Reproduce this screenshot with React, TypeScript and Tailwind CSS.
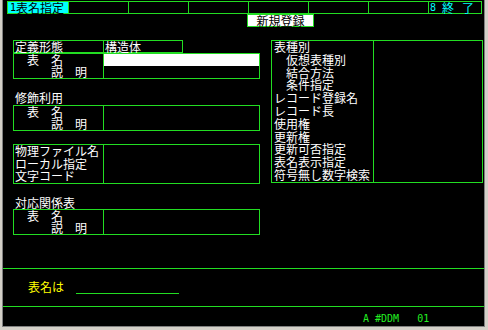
import React from 'react';

const G = 'border-[#22dd22]';

function Box2({ left, right, rows, leftW = 89, w, white }: { left: React.ReactNode; right?: React.ReactNode; rows: number; leftW?: number; w: string; white?: boolean }) {
  return (
    <div className={`flex border ${G} ${w}`} style={{ height: rows * 12 + 2 }}>
      <div className="shrink-0 leading-[12px] pl-[1px]" style={{ width: leftW }}>
        {left}
      </div>
      <div className={`flex-1 border-l ${G} leading-[12px]`}>
        {white && <div className="h-[12px] bg-white" />}
        {right}
      </div>
    </div>
  );
}

function NameDesc() {
  return (
    <>
      <div className="whitespace-pre">{'\u3000表\u3000名'}</div>
      <div className="whitespace-pre">{'\u3000\u3000\u3000説\u3000明'}</div>
    </>
  );
}

const rightRows: [string, boolean][] = [
  ['表種別', false],
  ['仮想表種別', true],
  ['結合方法', true],
  ['条件指定', true],
  ['レコード登録名', false],
  ['レコード長', false],
  ['使用権', false],
  ['更新権', false],
  ['更新可否指定', false],
  ['表名表示指定', false],
  ['符号無し数字検索', false],
];

export default function App() {
  return (
    <div className="w-[488px] h-[330px] bg-[#d4d0c8] pl-[2px] pr-[3px] pb-[3px] flex">
      <div
        className="flex-1 bg-black border-l border-r border-b border-[#808080] flex flex-col text-white text-[12px]"
        style={{ fontFamily: '"Noto Sans CJK JP", "DejaVu Sans Mono", monospace' }}
      >
        {/* function key bar */}
        <div className={`mt-[1px] ml-[4px] w-[475px] h-[13px] border ${G} flex leading-[11px]`}>
          <div className="w-[60px] bg-[#00ffff] text-black pl-[2px] flex items-center">
            <span className="text-[10px] font-['DejaVu_Sans_Mono'] w-[6px]">1</span>
            <span>表名指定</span>
          </div>
          {Array.from({ length: 6 }).map((_, i) => (
            <div key={i} className={`w-[60px] border-l ${G}`} />
          ))}
          <div className={`flex-1 border-l ${G} text-[#00ffff] pl-[1px] flex items-center`}>
            <span className="text-[10px] font-['DejaVu_Sans_Mono']">8</span>
            <span className="ml-[6px]">終</span>
            <span className="ml-[8px]">了</span>
          </div>
        </div>

        <div className={`ml-[244px] w-[67px] h-[13px] border ${G} bg-white text-black leading-[11px] text-center`}>
          新規登録
        </div>

        {/* main area */}
        <div className="mt-[13px] h-[234px] flex">
          <div className="ml-[10px] w-[247px] flex flex-col">
            <div className={`flex border ${G} w-[170px] h-[13px] leading-[11px]`}>
              <div className="w-[89px] pl-[1px]">定義形態</div>
              <div className={`flex-1 border-l ${G} pl-[1px]`}>構造体</div>
            </div>
            <Box2 w="w-[247px]" rows={2} white left={<NameDesc />} />
            <div className="mt-[12px] h-[13px] leading-[13px] pl-[2px]">修飾利用</div>
            <div className="mt-[1px]">
              <Box2 w="w-[247px]" rows={2} left={<NameDesc />} />
            </div>
            <div className="mt-[13px]">
              <div className={`flex border ${G} w-[247px] h-[40px]`}>
                <div className="w-[89px] leading-[12.7px] pl-[1px]">
                  <div>物理ファイル名</div>
                  <div>ローカル指定</div>
                  <div>文字コード</div>
                </div>
                <div className={`flex-1 border-l ${G}`} />
              </div>
            </div>
            <div className="mt-[12px] h-[13px] leading-[13px] pl-[2px]">対応関係表</div>
            <Box2 w="w-[247px]" rows={2} left={<NameDesc />} />
          </div>

          <div className="ml-[11px] w-[212px]">
            <div className={`flex border ${G} h-[143px]`}>
              <div className="w-[101px] pl-[2px] leading-[12.8px]">
                {rightRows.map(([t, ind]) => (
                  <div key={t} className={`whitespace-nowrap ${ind ? 'pl-[12px]' : ''}`}>
                    {t}
                  </div>
                ))}
              </div>
              <div className={`flex-1 border-l ${G}`} />
            </div>
          </div>
        </div>

        {/* prompt area */}
        <div className={`h-[39px] border-t ${G} pl-[25px] pt-[11px] flex items-start`}>
          <span className="text-[#ffff00] leading-[13px]">表名は</span>
          <div className={`ml-[12px] w-[103px] h-[14px] border-b ${G}`} />
        </div>

        {/* status line */}
        <div className={`flex-1 border-t ${G} pl-[360px] pt-[1px]`}>
          <span className="text-[10px] leading-[11px] text-[#22ee22] whitespace-pre font-['DejaVu_Sans_Mono']">
            {'A #DDM   01'}
          </span>
        </div>
      </div>
    </div>
  );
}
